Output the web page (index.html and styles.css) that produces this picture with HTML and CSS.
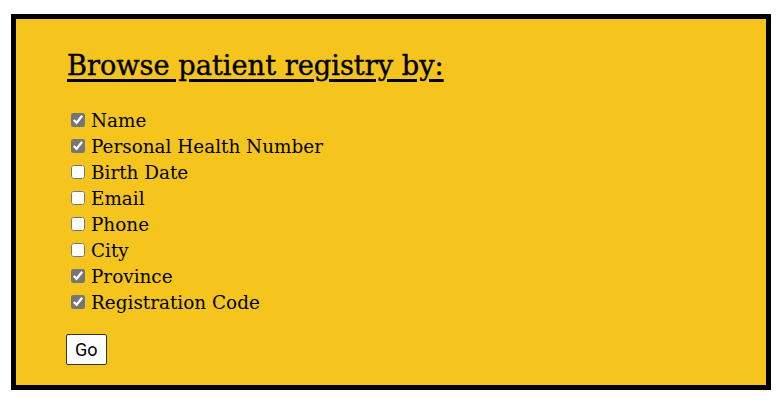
FILE: index.html
```html
<!DOCTYPE html>
<html>
<head>
<meta charset="utf-8">
<link rel="stylesheet" href="styles.css">
</head>
<body>
<div class="panel">
  <h2 class="title">Browse patient registry by:</h2>
  <form class="fields">
    <label class="row"><input type="checkbox" checked><span>Name</span></label>
    <label class="row"><input type="checkbox" checked><span>Personal Health Number</span></label>
    <label class="row"><input type="checkbox"><span>Birth Date</span></label>
    <label class="row"><input type="checkbox"><span>Email</span></label>
    <label class="row"><input type="checkbox"><span>Phone</span></label>
    <label class="row"><input type="checkbox"><span>City</span></label>
    <label class="row"><input type="checkbox" checked><span>Province</span></label>
    <label class="row"><input type="checkbox" checked><span>Registration Code</span></label>
    <div class="actions"><button type="button" class="go">Go</button></div>
  </form>
</div>
</body>
</html>
```
FILE: styles.css
```css
html, body {
  margin: 0;
  padding: 0;
  background: #fff;
}
body {
  padding: 14px 12px 14px 11px;
}
.panel {
  width: 760px;
  height: 376px;
  box-sizing: border-box;
  border: 5px solid #000;
  background: #f5c51d;
  padding: 27px 50px 0 50px;
  font-family: "DejaVu Serif", serif;
  color: #000;
}
.title {
  margin: 0 0 0 1px;
  font-size: 27.2px;
  font-weight: normal;
  -webkit-text-stroke: 0.4px #000;
  text-decoration: underline;
  text-decoration-thickness: 3px;
  text-underline-offset: 4px;
  line-height: 40px;
}
.fields {
  display: flex;
  flex-direction: column;
  margin-top: 21px;
}
.row {
  display: flex;
  align-items: center;
  height: 26px;
  font-size: 18.4px;
}
.row input {
  margin: 0 6px 0 5px;
  width: 14px;
  height: 14px;
  accent-color: #767676;
}
.actions {
  margin-top: 19px;
}
.go {
  font-family: "Roboto", sans-serif;
  font-size: 18px;
  padding: 4px 8px;
  background: #fff;
  border: 1px solid #333;
  border-radius: 2px;
  color: #000;
}
```
